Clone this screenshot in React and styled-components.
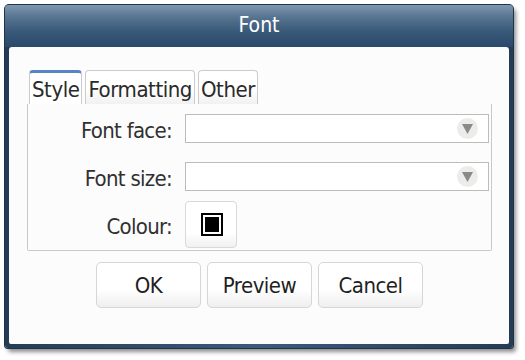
import React from "react";
import styled, { createGlobalStyle } from "styled-components";

const Global = createGlobalStyle`
  html, body { margin: 0; padding: 0; background: #ffffff; }
  body { font-family: "DejaVu Sans Condensed", "DejaVu Sans", sans-serif; }
  * { box-sizing: border-box; }
`;

const Stage = styled.div`
  padding: 5px 0 0 5px;
  width: 525px;
  height: 360px;
`;

const Window = styled.div`
  width: 508px;
  height: 343px;
  display: flex;
  flex-direction: column;
  padding: 0 4px 4px 4px;
  border-radius: 4px 4px 3px 3px;
  background: linear-gradient(90deg, #243c56 0%, #3d5a7a 50%, #243c56 100%);
  box-shadow: 0 0 0 1px #1f3349, 3px 4px 4px rgba(0, 0, 0, 0.45);
`;

const TitleBar = styled.div`
  height: 42px;
  flex: none;
  margin: 0 -4px;
  border-radius: 4px 4px 0 0;
  display: flex;
  align-items: center;
  justify-content: center;
  color: #ffffff;
  font-size: 21px;
  padding-bottom: 2px;
  background: linear-gradient(180deg, #7f97b1 0%, #56738f 30%, #385878 65%, #2a496b 100%);
`;

const Content = styled.div`
  flex: 1;
  background: #fdfcfd;
  border-radius: 3px 3px 2px 2px;
  padding: 23px 17px 0 18px;
  display: flex;
  flex-direction: column;
`;

const TabBar = styled.div`
  display: flex;
  gap: 3px;
  margin-left: 2px;
  height: 34px;
`;

const Tab = styled.div`
  height: 34px;
  padding: 0 2px;
  display: flex;
  align-items: center;
  font-size: 22px;
  letter-spacing: -0.45px;
  color: #2a2a2a;
  border: 1px solid #cbcbcb;
  border-bottom: none;
  border-radius: 4px 4px 0 0;
  background: ${(p) =>
    p.$active ? "#ffffff" : "linear-gradient(180deg, #ffffff 55%, #f2f0f1 100%)"};
  border-top: ${(p) => (p.$active ? "3px solid #5b84c4" : "1px solid #cbcbcb")};
  padding-top: ${(p) => (p.$active ? "1px" : "3px")};
`;

const Panel = styled.div`
  width: 465px;
  height: 147px;
  border: 1px solid #c9c9c9;
  border-top: none;
  border-radius: 0 0 2px 2px;
  padding: 10px 2px 0 0;
  display: grid;
  grid-template-columns: 144px 1fr;
  column-gap: 13px;
  align-content: start;
`;

const Label = styled.div`
  display: flex;
  align-items: center;
  justify-content: flex-end;
  font-size: 22px;
  letter-spacing: -0.7px;
  color: #303030;
  padding-top: 3px;
  margin-top: ${(p) => p.$mt || 0}px;
  height: ${(p) => p.$h}px;
`;

const Combo = styled.div`
  height: 29px;
  margin-top: ${(p) => p.$mt || 0}px;
  border: 1px solid #bdbdb6;
  background: #ffffff;
  display: flex;
  align-items: center;
  justify-content: flex-end;
  padding-right: 10px;
`;

const ArrowCircle = styled.div`
  width: 21px;
  height: 21px;
  border-radius: 50%;
  background: #ececec;
  display: flex;
  align-items: center;
  justify-content: center;
  padding-top: 1px;
`;

const ColourButton = styled.div`
  width: 52px;
  height: 47px;
  margin-top: ${(p) => p.$mt || 0}px;
  border: 1px solid #d9d9d9;
  border-radius: 4px;
  background: linear-gradient(180deg, #ffffff 70%, #f1eff0 100%);
  display: flex;
  align-items: center;
  justify-content: center;
  padding-left: 2px;
`;

const Swatch = styled.div`
  width: 22px;
  height: 23px;
  border: 2px solid #000000;
  padding: 2px;
  background: #ffffff;
  &::after {
    content: "";
    display: block;
    width: 100%;
    height: 100%;
    background: #000000;
  }
`;

const ButtonRow = styled.div`
  display: flex;
  justify-content: center;
  gap: 6px;
  margin-top: 11px;
`;

const Button = styled.div`
  width: 105px;
  height: 46px;
  border: 1px solid #d6d6d6;
  border-radius: 5px;
  background: linear-gradient(180deg, #ffffff 60%, #f0eeef 100%);
  display: flex;
  align-items: center;
  justify-content: center;
  font-size: 22px;
  letter-spacing: -0.5px;
  color: #1f1f1f;
  padding-top: 1px;
`;

const Arrow = () => (
  <svg width="11" height="10" viewBox="0 0 11 10">
    <polygon points="0,0 11,0 5.5,10" fill="#8a8a86" />
  </svg>
);

export default function App() {
  return (
    <>
      <Global />
      <Stage>
        <Window>
          <TitleBar>Font</TitleBar>
          <Content>
            <TabBar>
              <Tab $active>Style</Tab>
              <Tab>Formatting</Tab>
              <Tab>Other</Tab>
            </TabBar>
            <Panel>
              <Label $h={29}>Font face:</Label>
              <Combo>
                <ArrowCircle>
                  <Arrow />
                </ArrowCircle>
              </Combo>
              <Label $h={29} $mt={19}>Font size:</Label>
              <Combo $mt={19}>
                <ArrowCircle>
                  <Arrow />
                </ArrowCircle>
              </Combo>
              <Label $h={47} $mt={10}>Colour:</Label>
              <div>
                <ColourButton $mt={10}>
                  <Swatch />
                </ColourButton>
              </div>
            </Panel>
            <ButtonRow>
              <Button>OK</Button>
              <Button>Preview</Button>
              <Button>Cancel</Button>
            </ButtonRow>
          </Content>
        </Window>
      </Stage>
    </>
  );
}
